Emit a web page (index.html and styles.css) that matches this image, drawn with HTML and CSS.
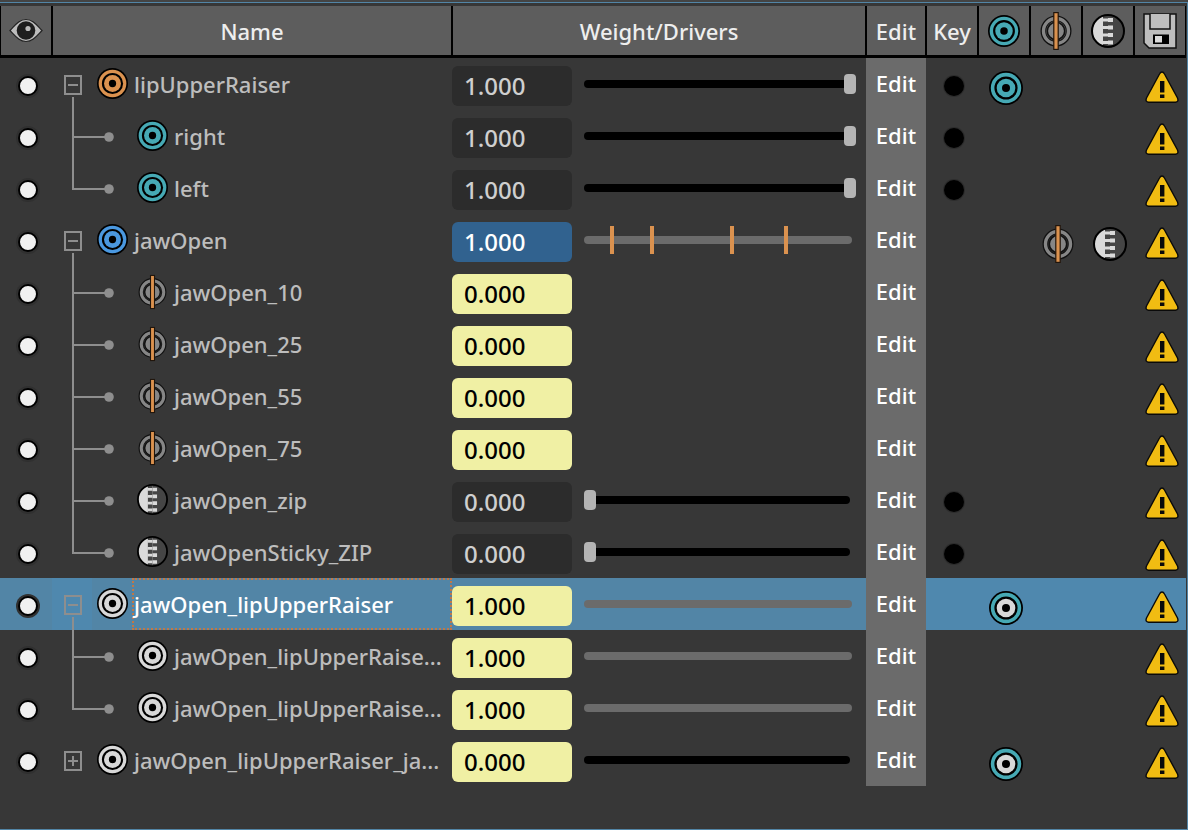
FILE: index.html
```html
<!DOCTYPE html>
<html lang="en">
<head>
<meta charset="utf-8">
<title>Shape Editor</title>
<link rel="stylesheet" href="styles.css">
</head>
<body>
<svg class="defs" aria-hidden="true">
  <symbol id="target" viewBox="0 0 34 34">
    <circle cx="17" cy="17" r="17" fill="#000"/>
    <circle cx="17" cy="17" r="15.200" fill="var(--outer, currentColor)"/>
    <circle cx="17" cy="17" r="11.600" fill="#000"/>
    <circle cx="17" cy="17" r="9.300" fill="currentColor"/>
    <circle cx="17" cy="17" r="4" fill="#000"/>
  </symbol>
  <symbol id="between" viewBox="0 0 34 40">
    <circle cx="17" cy="20" r="12.700" fill="none" stroke="#111" stroke-width="5.600"/>
    <circle cx="17" cy="20" r="12.500" fill="none" stroke="#868686" stroke-width="3.400"/>
    <circle cx="17" cy="20" r="8.700" fill="#868686" stroke="#111" stroke-width="1.600"/>
    <rect x="14.800" y="1.600" width="4.400" height="36.800" fill="#db924f" stroke="#20150c" stroke-width="1.200"/>
  </symbol>
  <symbol id="zip" viewBox="0 0 34 34">
    <circle cx="17" cy="17" r="16" fill="#454545"/>
    <path d="M12 1.800a16 16 0 0 0 0 30.400z" fill="#dadada"/>
    <path d="M12 1.800h5v30.400h-5z" fill="#dadada"/>
    <path d="M12 1.500h5v3h-5zM12 7.500h5v4.500h-5zM12 15h5v4.500h-5zM12 22.500h5v4.500h-5zM12 30h5v2h-5z" fill="#454545"/>
    <path d="M17 4h5v4h-5zM17 11.500h5v4h-5zM17 19h5v4h-5zM17 26.500h5v4h-5z" fill="#dadada"/>
    <circle cx="17" cy="17" r="16" fill="none" stroke="#000" stroke-width="2"/>
  </symbol>
  <symbol id="eye" viewBox="0 0 34 26">
    <path d="M1 12.500C6 7.500 10 1.500 17 1.500S28 7.500 33 12.500C28 17.500 24 23.500 17 23.500S6 17.500 1 12.500z" fill="#bcbcbc" stroke="#222" stroke-width="1.200"/>
    <circle cx="17" cy="12.500" r="9.300" fill="#1e1e1e"/>
    <circle cx="19" cy="10.500" r="2.600" fill="#bcbcbc"/>
  </symbol>
  <symbol id="save" viewBox="0 0 34 36">
    <path d="M1 1h32v34H6l-5-5z" fill="#bebebe" stroke="#111" stroke-width="1.500"/>
    <path d="M7 1v15h20V1" fill="#bebebe" stroke="#111" stroke-width="1.500"/>
    <path d="M10 21.500h16v9.500H10z" fill="#000"/>
    <path d="M12 23h7v6.500h-7z" fill="#dadada"/>
  </symbol>
  <symbol id="warn" viewBox="0 1 34 34">
    <path d="M17 2q1.500 0 2.500 2L32.500 28q1.500 4-2 4.200h-27Q0 32 1.500 28L14.500 4q1-2 2.500-2z" fill="#f1bc12" stroke="#0a0a0a" stroke-width="1.400"/>
    <path d="M15 11h4.400v11.500H15zM15 24.500h4.400v3.500H15z" fill="#0a0a0a"/>
  </symbol>
  <symbol id="minus" viewBox="0 0 40 52">
    <path d="M13 18h16v18H13zM16 27h10" fill="none" stroke="#8e8e8e" stroke-width="2"/>
    <path d="M21 39v13" stroke="#8e8e8e" stroke-width="2"/>
  </symbol>
  <symbol id="plus" viewBox="0 0 40 52">
    <path d="M13 18h16v18H13zM16 27h10M21 22v10" fill="none" stroke="#8e8e8e" stroke-width="2"/>
  </symbol>
  <symbol id="mid" viewBox="0 0 80 52">
    <path d="M21 0v52M21 27h36" fill="none" stroke="#8e8e8e" stroke-width="2"/>
    <circle cx="57" cy="27" r="4.800" fill="#8e8e8e"/>
  </symbol>
  <symbol id="end" viewBox="0 0 80 52">
    <path d="M21 0v27h36" fill="none" stroke="#8e8e8e" stroke-width="2"/>
    <circle cx="57" cy="27" r="4.800" fill="#8e8e8e"/>
  </symbol>
</svg>

<main class="panel">
<table class="shapes">
  <colgroup>
    <col class="col-icon"><col class="col-name"><col><col class="col-edit">
    <col class="col-icon"><col class="col-icon"><col class="col-icon"><col class="col-icon"><col class="col-icon">
  </colgroup>
  <thead>
    <tr>
      <th aria-label="Visibility"><svg class="ico-eye"><use href="#eye"/></svg></th>
      <th>Name</th>
      <th>Weight/Drivers</th>
      <th>Edit</th>
      <th>Key</th>
      <th aria-label="Target"><svg class="ico-target teal"><use href="#target"/></svg></th>
      <th aria-label="In-between"><svg class="ico-between"><use href="#between"/></svg></th>
      <th aria-label="Zip"><svg class="ico-large"><use href="#zip"/></svg></th>
      <th aria-label="Save"><svg class="ico-save"><use href="#save"/></svg></th>
    </tr>
  </thead>
  <tbody>
    <tr>
      <td><div class="mark"><input type="checkbox" class="dot" checked aria-label="Show lipUpperRaiser"></div></td>
      <td><div class="name"><button class="twig" aria-label="Collapse"><svg><use href="#minus"/></svg></button><span class="kind"><svg class="ico orange"><use href="#target"/></svg></span><span class="label">lipUpperRaiser</span></div></td>
      <td><div class="weight"><input class="value" value="1.000" aria-label="Weight"><div class="slider"><input type="range" value="100" aria-label="Weight slider"></div></div></td>
      <td class="edit"><button>Edit</button></td>
      <td><div class="mark"><button class="key" aria-label="Key"></button></div></td>
      <td><div class="flag"><svg class="ico-large teal"><use href="#target"/></svg></div></td>
      <td></td><td></td>
      <td><div class="flag"><svg class="ico-warn"><use href="#warn"/></svg></div></td>
    </tr>
    <tr>
      <td><div class="mark"><input type="checkbox" class="dot" checked aria-label="Show right"></div></td>
      <td><div class="name"><svg class="branch"><use href="#mid"/></svg><span class="kind"><svg class="ico teal"><use href="#target"/></svg></span><span class="label">right</span></div></td>
      <td><div class="weight"><input class="value" value="1.000" aria-label="Weight"><div class="slider"><input type="range" value="100" aria-label="Weight slider"></div></div></td>
      <td class="edit"><button>Edit</button></td>
      <td><div class="mark"><button class="key" aria-label="Key"></button></div></td>
      <td></td><td></td><td></td>
      <td><div class="flag"><svg class="ico-warn"><use href="#warn"/></svg></div></td>
    </tr>
    <tr>
      <td><div class="mark"><input type="checkbox" class="dot" checked aria-label="Show left"></div></td>
      <td><div class="name"><svg class="branch"><use href="#end"/></svg><span class="kind"><svg class="ico teal"><use href="#target"/></svg></span><span class="label">left</span></div></td>
      <td><div class="weight"><input class="value" value="1.000" aria-label="Weight"><div class="slider"><input type="range" value="100" aria-label="Weight slider"></div></div></td>
      <td class="edit"><button>Edit</button></td>
      <td><div class="mark"><button class="key" aria-label="Key"></button></div></td>
      <td></td><td></td><td></td>
      <td><div class="flag"><svg class="ico-warn"><use href="#warn"/></svg></div></td>
    </tr>
    <tr>
      <td><div class="mark"><input type="checkbox" class="dot" checked aria-label="Show jawOpen"></div></td>
      <td><div class="name"><button class="twig" aria-label="Collapse"><svg><use href="#minus"/></svg></button><span class="kind"><svg class="ico blue"><use href="#target"/></svg></span><span class="label">jawOpen</span></div></td>
      <td><div class="weight"><input class="value active" value="1.000" aria-label="Weight"><div class="track"><i style="left:10%"></i><i style="left:25%"></i><i style="left:55%"></i><i style="left:75%"></i></div></div></td>
      <td class="edit"><button>Edit</button></td>
      <td></td><td></td>
      <td><div class="flag"><svg class="ico-between"><use href="#between"/></svg></div></td>
      <td><div class="flag"><svg class="ico-large"><use href="#zip"/></svg></div></td>
      <td><div class="flag"><svg class="ico-warn"><use href="#warn"/></svg></div></td>
    </tr>
    <tr>
      <td><div class="mark"><input type="checkbox" class="dot" checked aria-label="Show jawOpen_10"></div></td>
      <td><div class="name"><svg class="branch"><use href="#mid"/></svg><span class="kind"><svg class="ico-small"><use href="#between"/></svg></span><span class="label">jawOpen_10</span></div></td>
      <td><div class="weight"><input class="value driven" value="0.000" aria-label="Weight"></div></td>
      <td class="edit"><button>Edit</button></td>
      <td></td><td></td><td></td><td></td>
      <td><div class="flag"><svg class="ico-warn"><use href="#warn"/></svg></div></td>
    </tr>
    <tr>
      <td><div class="mark"><input type="checkbox" class="dot" checked aria-label="Show jawOpen_25"></div></td>
      <td><div class="name"><svg class="branch"><use href="#mid"/></svg><span class="kind"><svg class="ico-small"><use href="#between"/></svg></span><span class="label">jawOpen_25</span></div></td>
      <td><div class="weight"><input class="value driven" value="0.000" aria-label="Weight"></div></td>
      <td class="edit"><button>Edit</button></td>
      <td></td><td></td><td></td><td></td>
      <td><div class="flag"><svg class="ico-warn"><use href="#warn"/></svg></div></td>
    </tr>
    <tr>
      <td><div class="mark"><input type="checkbox" class="dot" checked aria-label="Show jawOpen_55"></div></td>
      <td><div class="name"><svg class="branch"><use href="#mid"/></svg><span class="kind"><svg class="ico-small"><use href="#between"/></svg></span><span class="label">jawOpen_55</span></div></td>
      <td><div class="weight"><input class="value driven" value="0.000" aria-label="Weight"></div></td>
      <td class="edit"><button>Edit</button></td>
      <td></td><td></td><td></td><td></td>
      <td><div class="flag"><svg class="ico-warn"><use href="#warn"/></svg></div></td>
    </tr>
    <tr>
      <td><div class="mark"><input type="checkbox" class="dot" checked aria-label="Show jawOpen_75"></div></td>
      <td><div class="name"><svg class="branch"><use href="#mid"/></svg><span class="kind"><svg class="ico-small"><use href="#between"/></svg></span><span class="label">jawOpen_75</span></div></td>
      <td><div class="weight"><input class="value driven" value="0.000" aria-label="Weight"></div></td>
      <td class="edit"><button>Edit</button></td>
      <td></td><td></td><td></td><td></td>
      <td><div class="flag"><svg class="ico-warn"><use href="#warn"/></svg></div></td>
    </tr>
    <tr>
      <td><div class="mark"><input type="checkbox" class="dot" checked aria-label="Show jawOpen_zip"></div></td>
      <td><div class="name"><svg class="branch"><use href="#mid"/></svg><span class="kind"><svg class="ico"><use href="#zip"/></svg></span><span class="label">jawOpen_zip</span></div></td>
      <td><div class="weight"><input class="value" value="0.000" aria-label="Weight"><div class="slider"><input type="range" value="0" aria-label="Weight slider"></div></div></td>
      <td class="edit"><button>Edit</button></td>
      <td><div class="mark"><button class="key" aria-label="Key"></button></div></td>
      <td></td><td></td><td></td>
      <td><div class="flag"><svg class="ico-warn"><use href="#warn"/></svg></div></td>
    </tr>
    <tr>
      <td><div class="mark"><input type="checkbox" class="dot" checked aria-label="Show jawOpenSticky_ZIP"></div></td>
      <td><div class="name"><svg class="branch"><use href="#end"/></svg><span class="kind"><svg class="ico"><use href="#zip"/></svg></span><span class="label">jawOpenSticky_ZIP</span></div></td>
      <td><div class="weight"><input class="value" value="0.000" aria-label="Weight"><div class="slider"><input type="range" value="0" aria-label="Weight slider"></div></div></td>
      <td class="edit"><button>Edit</button></td>
      <td><div class="mark"><button class="key" aria-label="Key"></button></div></td>
      <td></td><td></td><td></td>
      <td><div class="flag"><svg class="ico-warn"><use href="#warn"/></svg></div></td>
    </tr>
    <tr class="selected">
      <td><div class="mark"><input type="checkbox" class="dot" checked aria-label="Show jawOpen_lipUpperRaiser"></div></td>
      <td><div class="name"><button class="twig" aria-label="Collapse"><svg><use href="#minus"/></svg></button><span class="kind"><svg class="ico light"><use href="#target"/></svg></span><span class="label">jawOpen_lipUpperRaiser</span></div></td>
      <td><div class="weight"><input class="value driven" value="1.000" aria-label="Weight"><div class="track"></div></div></td>
      <td class="edit"><button>Edit</button></td>
      <td></td>
      <td><div class="flag"><svg class="ico-large combo"><use href="#target"/></svg></div></td>
      <td></td><td></td>
      <td><div class="flag"><svg class="ico-warn"><use href="#warn"/></svg></div></td>
    </tr>
    <tr>
      <td><div class="mark"><input type="checkbox" class="dot" checked aria-label="Show shape"></div></td>
      <td><div class="name"><svg class="branch"><use href="#mid"/></svg><span class="kind"><svg class="ico light"><use href="#target"/></svg></span><span class="label">jawOpen_lipUpperRaise...</span></div></td>
      <td><div class="weight"><input class="value driven" value="1.000" aria-label="Weight"><div class="track"></div></div></td>
      <td class="edit"><button>Edit</button></td>
      <td></td><td></td><td></td><td></td>
      <td><div class="flag"><svg class="ico-warn"><use href="#warn"/></svg></div></td>
    </tr>
    <tr>
      <td><div class="mark"><input type="checkbox" class="dot" checked aria-label="Show shape"></div></td>
      <td><div class="name"><svg class="branch"><use href="#end"/></svg><span class="kind"><svg class="ico light"><use href="#target"/></svg></span><span class="label">jawOpen_lipUpperRaise...</span></div></td>
      <td><div class="weight"><input class="value driven" value="1.000" aria-label="Weight"><div class="track"></div></div></td>
      <td class="edit"><button>Edit</button></td>
      <td></td><td></td><td></td><td></td>
      <td><div class="flag"><svg class="ico-warn"><use href="#warn"/></svg></div></td>
    </tr>
    <tr>
      <td><div class="mark"><input type="checkbox" class="dot" checked aria-label="Show shape"></div></td>
      <td><div class="name"><button class="twig" aria-label="Expand"><svg><use href="#plus"/></svg></button><span class="kind"><svg class="ico light"><use href="#target"/></svg></span><span class="label">jawOpen_lipUpperRaiser_ja...</span></div></td>
      <td><div class="weight"><input class="value driven" value="0.000" aria-label="Weight"><div class="track dark"></div></div></td>
      <td class="edit"><button>Edit</button></td>
      <td></td>
      <td><div class="flag"><svg class="ico-large combo"><use href="#target"/></svg></div></td>
      <td></td><td></td>
      <td><div class="flag"><svg class="ico-warn"><use href="#warn"/></svg></div></td>
    </tr>
  </tbody>
</table>
</main>
</body>
</html>
```

FILE: styles.css
```css
* { box-sizing: border-box; }

body {
  margin: 0;
  padding-top: 2px;
  background: #444;
  font: 500 22px/30px "Noto Sans", "Open Sans", sans-serif;
  color: #bdbdbd;
}

button {
  padding: 0;
  border: 0;
  background: none;
  font: inherit;
  color: inherit;
}

svg { display: block; flex: none; }
.defs { position: absolute; width: 0; height: 0; }

.panel {
  min-height: calc(100vh - 2px);
  padding: 3px 1px 0 0;
  border: solid #5285a6;
  border-width: 1px 1px 1px 0;
  background: #373737;
}

.shapes {
  width: 100%;
  table-layout: fixed;
  border-collapse: separate;
  border-spacing: 0;
}
.col-icon { width: 52px; }
.col-name { width: 400px; }
.col-edit { width: 60px; }

th {
  height: 52px;
  padding: 0;
  background: #5d5d5d;
  border: solid #000;
  border-width: 0 1px 3px;
  font-weight: 500;
  color: #eee;
}
th svg { margin: 0 auto; }

td { height: 52px; padding: 0; }

/* icons */
.ico { width: 31px; height: 31px; }
.ico-small { width: 31px; height: 36px; }
.ico-target { width: 32px; height: 32px; }
.ico-large { width: 34px; height: 34px; }
.ico-between { width: 34px; height: 40px; }
.ico-eye { width: 34px; height: 26px; }
.ico-save { width: 34px; height: 36px; }
.ico-warn { width: 34px; height: 34px; }
.orange { color: #db924f; }
.teal { color: #46a9b4; }
.blue { color: #4a98e0; }
.light { color: #d8d8d8; }
.combo { color: #d8d8d8; --outer: #46a9b4; }

/* cell contents */
.mark, .flag {
  display: flex;
  justify-content: center;
  align-items: center;
  height: 52px;
  padding: 4px 0 0 4px;
}
.flag { padding-top: 8px; }

.dot {
  appearance: none;
  width: 20px;
  height: 20px;
  margin: 0;
  border: 2px solid #000;
  border-radius: 50%;
  background: #f0f0f0;
  box-shadow: 0 0 0 2px #303030;
}
.key {
  width: 20px;
  height: 20px;
  border-radius: 50%;
  background: #000;
  box-shadow: 0 0 0 1px #2c2c2c;
}

.name { display: flex; height: 52px; }
.branch { width: 80px; height: 52px; }
.twig, .twig svg { width: 40px; height: 52px; }
.kind {
  display: flex;
  flex: none;
  align-items: center;
  width: 40px;
  padding: 0 0 1px 5px;
}
.label {
  flex: 1;
  min-width: 0;
  padding-left: 2px;
  line-height: 52px;
  white-space: nowrap;
}

.weight { display: flex; align-items: center; height: 52px; }
.value {
  width: 120px;
  height: 40px;
  margin: 4px 12px 0 0;
  padding: 0 0 2px 12px;
  border: 0;
  border-radius: 6px;
  background: #2c2c2c;
  font: 500 24px "Noto Sans", "Open Sans", sans-serif;
  color: #cfcfcf;
}
.value.active { background: #31628f; color: #fff; }
.value.driven { background: #f0f0a4; color: #000; }

.slider {
  position: relative;
  flex: 1;
  height: 20px;
  margin-right: 10px;
}
.slider::before {
  content: "";
  position: absolute;
  inset: 6px 6px 6px 0;
  border-radius: 4px;
  background: #000;
}
.slider input {
  position: relative;
  display: block;
  appearance: none;
  width: 100%;
  height: 20px;
  margin: 0;
  background: none;
}
.slider input::-webkit-slider-thumb {
  appearance: none;
  width: 12px;
  height: 20px;
  border-radius: 4px;
  background: #b4b4b4;
}

.track {
  position: relative;
  flex: 1;
  height: 8px;
  margin-right: 14px;
  border-radius: 4px;
  background: #6b6b6b;
}
.track.dark { margin-right: 16px; background: #000; }
.track i {
  position: absolute;
  top: -10px;
  width: 4px;
  height: 28px;
  margin-left: -1px;
  background: #db924f;
}

.edit { background: #6b6b6b; color: #fff; }
.edit button {
  display: block;
  width: 100%;
  height: 52px;
  padding-bottom: 2px;
}

.selected td { background: #4f88ae; }
.selected td:nth-child(-n+3) { background: #5285a6; }
.selected td.edit { background: #6b6b6b; }
.selected .twig { background: #4f88ae; }
.selected .label {
  border: 2px dotted #c07848;
  padding-left: 0;
  line-height: 48px;
  color: #fff;
}
```
